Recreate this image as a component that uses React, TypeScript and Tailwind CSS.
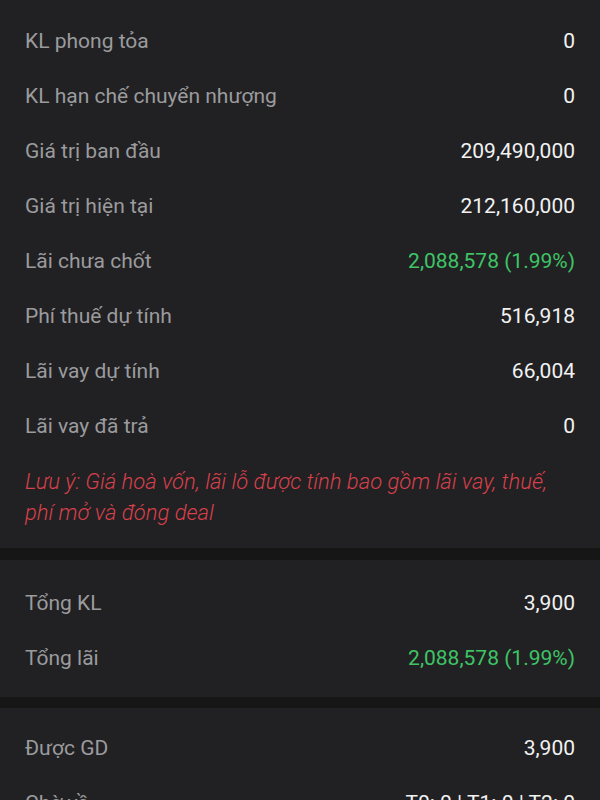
import React, { FC } from 'react'

type Row = { label: string; value: string; green?: boolean }

const detailRows: Row[] = [
  { label: 'KL phong tỏa', value: '0' },
  { label: 'KL hạn chế chuyển nhượng', value: '0' },
  { label: 'Giá trị ban đầu', value: '209,490,000' },
  { label: 'Giá trị hiện tại', value: '212,160,000' },
  { label: 'Lãi chưa chốt', value: '2,088,578 (1.99%)', green: true },
  { label: 'Phí thuế dự tính', value: '516,918' },
  { label: 'Lãi vay dự tính', value: '66,004' },
  { label: 'Lãi vay đã trả', value: '0' },
]

const totalRows: Row[] = [
  { label: 'Tổng KL', value: '3,900' },
  { label: 'Tổng lãi', value: '2,088,578 (1.99%)', green: true },
]

const tradeRows: Row[] = [
  { label: 'Được GD', value: '3,900' },
  { label: 'Chờ về', value: 'T0: 0 | T1: 0 | T2: 0' },
]

const InfoRow: FC<{ row: Row }> = ({ row }) => (
  <div className="flex h-[55px] items-center justify-between px-[25px]">
    <span className="text-[#9b9b9d]">{row.label}</span>
    <span className={row.green ? 'text-[#3ec465]' : 'text-[#f2f2f2]'}>{row.value}</span>
  </div>
)

export default function App() {
  return (
    <div
      className="h-[800px] w-[600px] overflow-hidden bg-[#161617] text-[21px]"
      style={{ fontFamily: 'Roboto, "Noto Sans", sans-serif' }}
    >
      {/* chi tiết */}
      <div className="bg-[#212124] pt-[14px] pb-[20px]">
        {detailRows.map((r) => (
          <InfoRow key={r.label} row={r} />
        ))}
        <p className="mt-[12px] px-[25px] text-[22px] font-light italic leading-[31px] text-[#d8404a]">
          Lưu ý: Giá hoà vốn, lãi lỗ được tính bao gồm lãi vay, thuế,
          <br />
          phí mở và đóng deal
        </p>
      </div>

      {/* tổng */}
      <div className="mt-[12px] bg-[#212124] pt-[16px] pb-[11px]">
        {totalRows.map((r) => (
          <InfoRow key={r.label} row={r} />
        ))}
      </div>

      {/* giao dịch */}
      <div className="mt-[11px] bg-[#212124] pt-[13px] pb-[12px]">
        {tradeRows.map((r) => (
          <InfoRow key={r.label} row={r} />
        ))}
      </div>
    </div>
  )
}
